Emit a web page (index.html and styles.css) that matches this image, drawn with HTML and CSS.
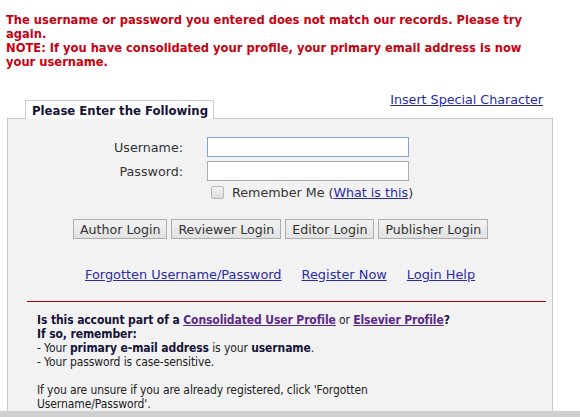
FILE: index.html
```html
<!DOCTYPE html>
<html>
<head>
<meta charset="utf-8">
<link rel="stylesheet" href="styles.css">
</head>
<body>
<div class="error">
  <p>The username or password you entered does not match our records. Please try again.</p>
  <p>NOTE: If you have consolidated your profile, your primary email address is now your username.</p>
</div>
<div class="tabrow">
  <div class="tab">Please Enter the Following</div>
  <a class="special" href="#">Insert Special Character</a>
</div>
<div class="panel">
  <div class="form">
    <label class="lbl">Username:</label>
    <input class="field focused" type="text">
    <label class="lbl">Password:</label>
    <input class="field" type="password">
    <span></span>
    <div class="remember"><span class="cb"></span>Remember Me (<a href="#">What is this</a>)</div>
  </div>
  <div class="buttons">
    <button class="btn">Author Login</button>
    <button class="btn">Reviewer Login</button>
    <button class="btn">Editor Login</button>
    <button class="btn">Publisher Login</button>
  </div>
  <div class="links">
    <a href="#">Forgotten Username/Password</a>
    <a href="#">Register Now</a>
    <a href="#">Login Help</a>
  </div>
  <hr class="rule">
  <div class="info">
    <p><b>Is this account part of a <a class="v" href="#">Consolidated User Profile</a></b> or <b><a class="v" href="#">Elsevier Profile</a>?<br>If so, remember:</b><br>- Your <b>primary e-mail address</b> is your <b>username</b>.<br>- Your password is case-sensitive.</p>
    <p>If you are unsure if you are already registered, click 'Forgotten Username/Password'.</p>
  </div>
</div>
<div class="scrollbar"></div>
</body>
</html>
```
FILE: styles.css
```css
body {
  margin: 0;
  font-family: "DejaVu Sans", Verdana, sans-serif;
  font-size: 13px;
  color: #222;
  background: #fff;
  overflow: hidden;
}
p { margin: 0; }
a { color: #2a2aa8; }
.error {
  padding: 13px 0 0 6px;
  width: 538px;
  color: #c8000f;
  font-family: "DejaVu Sans Condensed", "DejaVu Sans", sans-serif;
  font-stretch: condensed;
  font-weight: bold;
  font-size: 12.8px;
  line-height: 14px;
}
.tabrow {
  display: flex;
  justify-content: space-between;
  align-items: flex-end;
  margin: 23px 0 0 25px;
  width: 518px;
}
.tab {
  background: #fff;
  border: 1px solid #ccc;
  border-bottom: none;
  padding: 2px 5px 1px 6px;
  font-family: "DejaVu Sans Condensed", "DejaVu Sans", sans-serif;
  font-stretch: condensed;
  font-weight: bold;
  color: #14143a;
  position: relative;
  top: 1px;
}
.special {
  margin-bottom: 11px;
  font-size: 12.7px;
}
.panel {
  margin-left: 7px;
  width: 544px;
  background: #f2f2f2;
  border: 1px solid #c8c8c8;
  height: 300px;
}
.form {
  display: grid;
  grid-template-columns: 175px 202px;
  column-gap: 24px;
  row-gap: 4px;
  padding-top: 18px;
  align-items: center;
}
.lbl {
  text-align: right;
  color: #333;
  font-size: 12.7px;
}
.field {
  box-sizing: border-box;
  width: 202px;
  height: 20px;
  margin: 0;
  border: 1px solid #abadb3;
  background: #fff;
}
.field.focused {
  border-color: #7aa7d8;
}
.remember {
  display: flex;
  align-items: center;
  color: #333;
  padding-left: 4px;
  white-space: nowrap;
  font-size: 12.7px;
}
.cb {
  flex: 0 0 auto;
  width: 11px;
  height: 11px;
  border: 1px solid #b8b8b8;
  background: linear-gradient(#f4f4f4, #dcdcdc);
  border-radius: 2px;
  margin-right: 8px;
}
.buttons {
  display: flex;
  justify-content: flex-start;
  gap: 4px;
  margin: 19px 0 0 65px;
}
.btn {
  font-family: inherit;
  font-size: 12.6px;
  height: 20px;
  padding: 0 6px;
  border: 1px solid #adadad;
  background: linear-gradient(#f2f2f2, #e2e2e2);
  color: #333;
}
.links {
  display: flex;
  gap: 20px;
  margin: 28px 0 0 77px;
  font-size: 12.9px;
}
.rule {
  margin: 19px 6px 0 19px;
  border: none;
  border-top: 1px solid #b00015;
}
.info {
  padding: 11px 0 0 29px;
  line-height: 14px;
  color: #222;
  width: 440px;
  font-family: "DejaVu Sans Condensed", "DejaVu Sans", sans-serif;
  font-stretch: condensed;
  font-size: 12px;
  letter-spacing: -0.1px;
}
.info p + p { margin-top: 14px; }
.info b { color: #14143a; }
.info a.v { color: #5a2a8a; }
.scrollbar {
  position: fixed;
  left: 0;
  right: 0;
  bottom: 0;
  height: 6px;
  background: #cfcfcf;
}
```
